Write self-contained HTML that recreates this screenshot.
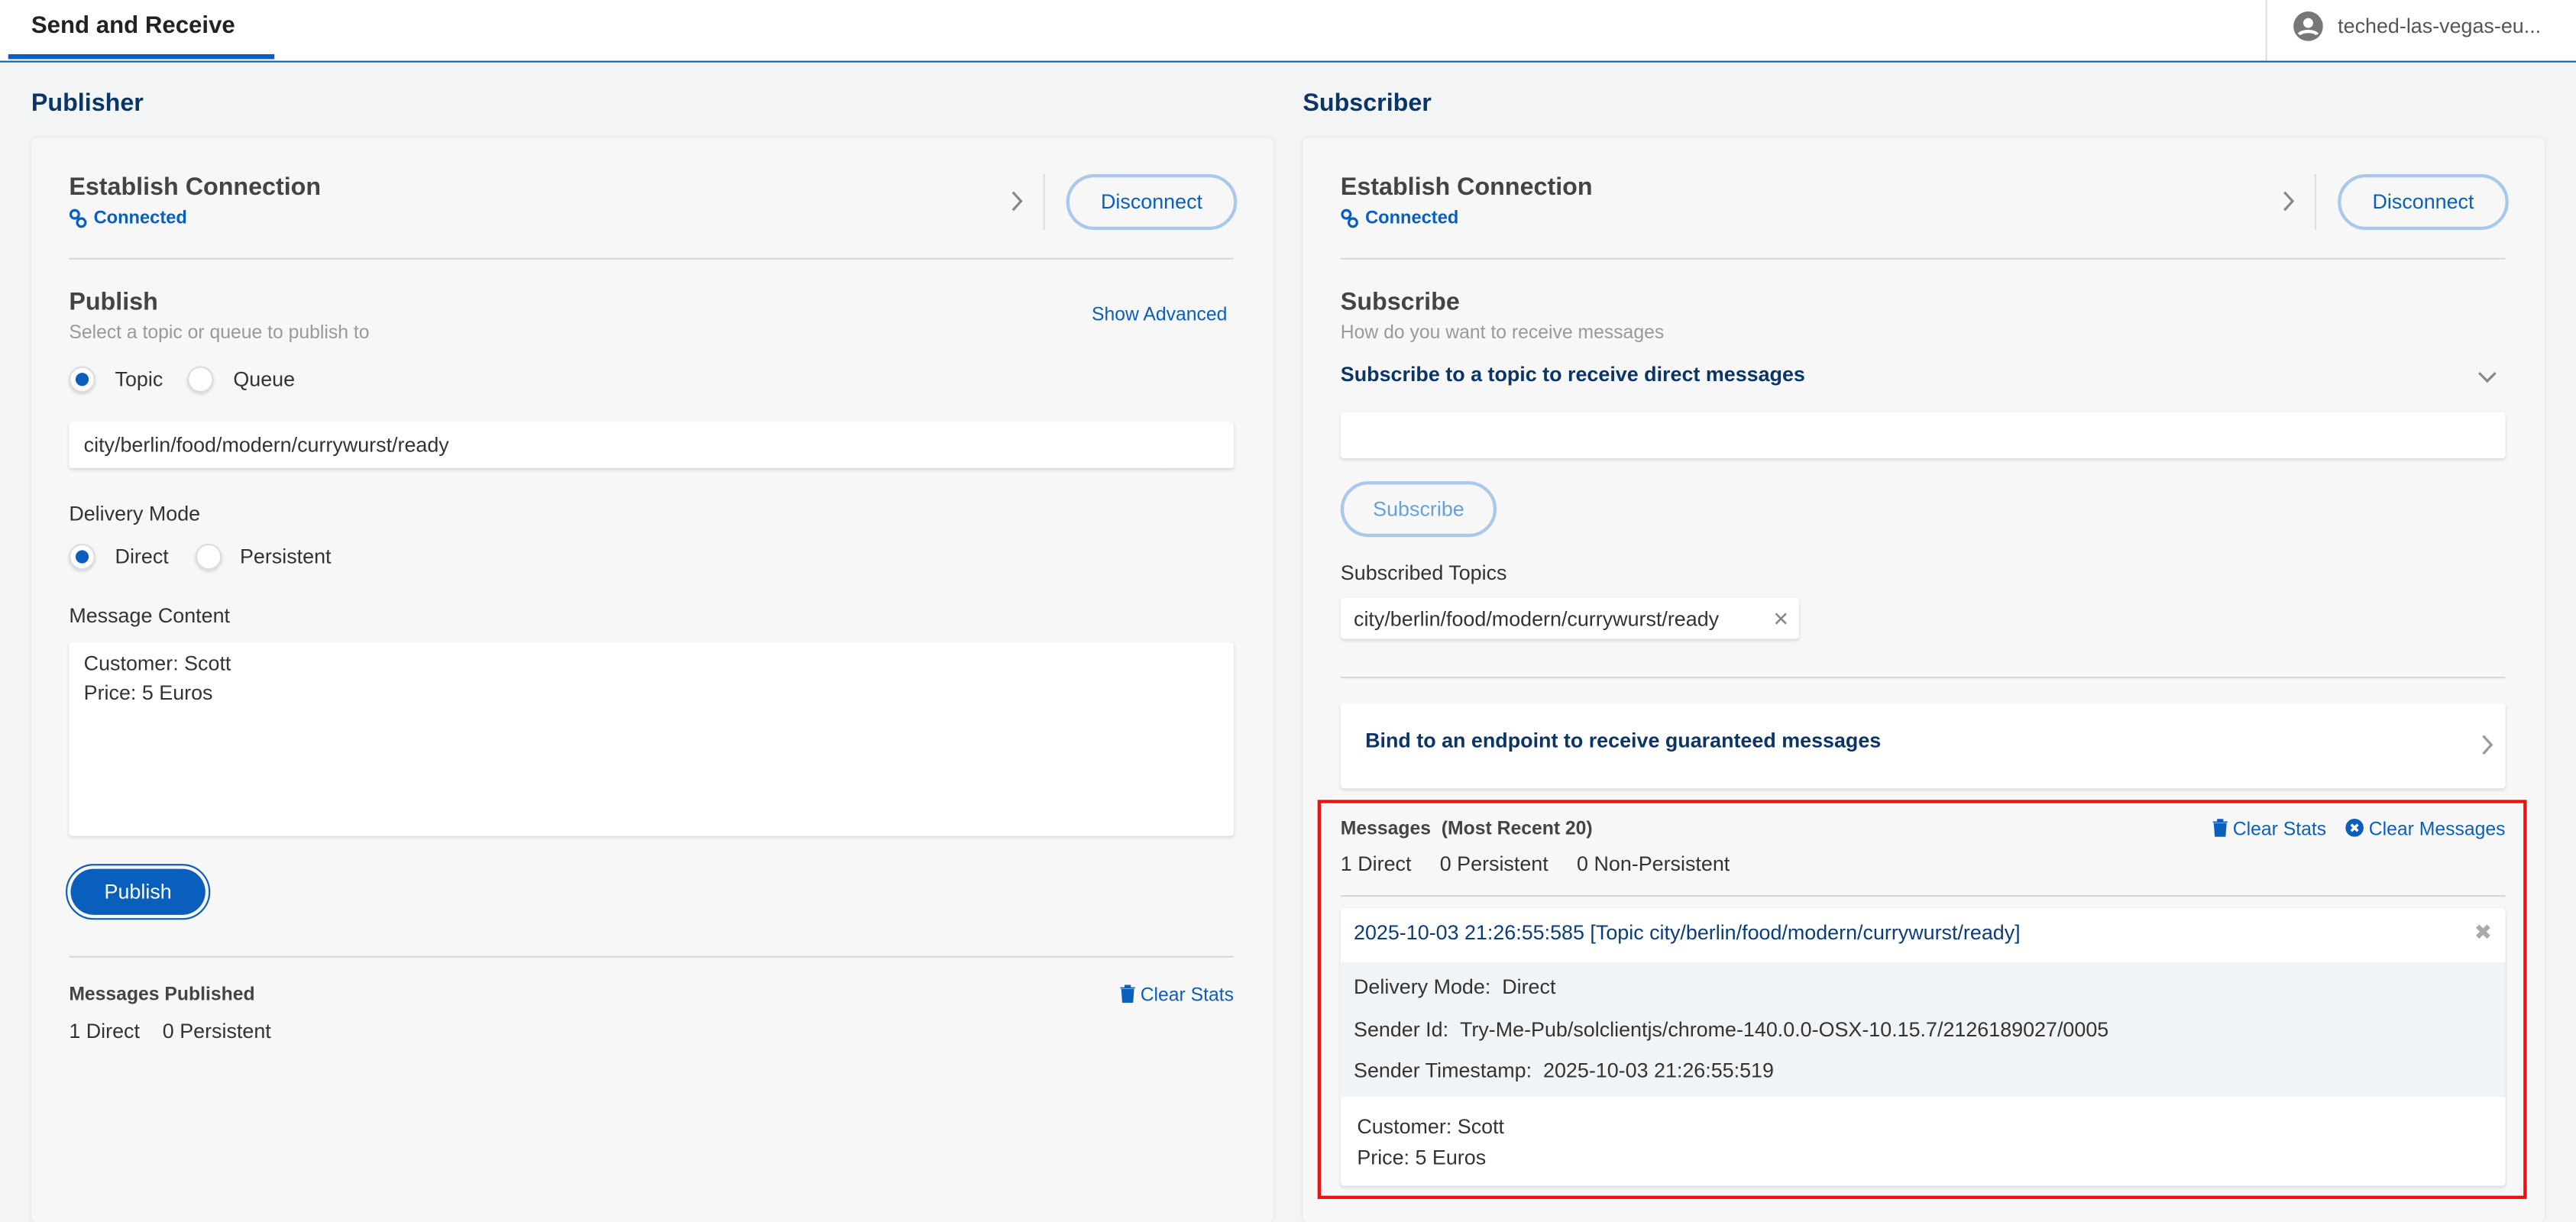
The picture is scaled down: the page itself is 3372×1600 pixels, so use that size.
<!DOCTYPE html>
<html><head><meta charset="utf-8"><style>
html,body{margin:0;padding:0;width:3372px;height:1582px;overflow:hidden;background:#f3f4f4;}
#w{position:absolute;left:0;top:0;width:1568px;height:736px;transform:scale(2.1505);transform-origin:0 0;font-family:"Liberation Sans",sans-serif;color:#333;font-size:12.5px;}
.a{position:absolute;white-space:nowrap;}
.b{font-weight:bold;}
.blue{color:#0a5fbd;}
.navy{color:#0b3566;}
.card{position:absolute;background:#f7f7f7;box-shadow:0 0 2px rgba(0,0,0,.08);border-radius:3px;}
.hr{position:absolute;height:1px;background:#d8d8d8;}
.btn{position:absolute;border:2px solid #a9c8ec;border-radius:18px;color:#0a5fbd;text-align:center;box-sizing:border-box;}
.inp{position:absolute;background:#fff;box-shadow:0 1px 2px rgba(0,0,0,.12);border-radius:2px;}
.rad{position:absolute;width:16px;height:16px;border-radius:50%;border:1px solid #ddd;background:#fff;box-shadow:0 1px 2px rgba(0,0,0,.15);box-sizing:border-box;}
.rad.on::after{content:"";position:absolute;left:3px;top:3px;width:8px;height:8px;border-radius:50%;background:#0a5fbd;}
.t{transform:translateY(-50%);}
.h2{font-size:15px;font-weight:bold;color:#444;}
.r{transform:translate(-100%,-50%);}
</style></head><body><div id="w">
<div class="a" style="left:0;top:0;width:1568px;height:37px;background:#fff;border-bottom:1px solid #0a5fbd;"></div>
<div class="a b t" style="left:19px;top:16px;font-size:14.5px;color:#222;">Send and Receive</div>
<div class="a" style="left:5px;top:33px;width:162px;height:3px;background:#0a5fbd;"></div>
<div class="a" style="left:1379px;top:0;width:1px;height:37px;background:#ddd;"></div>
<svg class="a" style="left:1396px;top:7px" width="18" height="18" viewBox="0 0 18 18"><circle cx="9" cy="9" r="9" fill="#777"/><circle cx="9" cy="7" r="3" fill="#fff"/><path d="M3.5 14c1.5-2.5 9.5-2.5 11 0" stroke="#fff" stroke-width="2" fill="none"/></svg>
<div class="a t" style="left:1423px;top:16px;color:#555;">teched-las-vegas-eu...</div>

<div class="a b t navy" style="left:19px;top:63px;font-size:15px;">Publisher</div>
<div class="a b t navy" style="left:793px;top:63px;font-size:15px;">Subscriber</div>

<div class="card" style="left:19px;top:84px;width:756px;height:660px;"></div>
<div class="card" style="left:793px;top:84px;width:756px;height:660px;"></div>

<!-- publisher -->
<div class="a h2 t" style="left:42px;top:114px;">Establish Connection</div>
<svg class="a" style="left:42px;top:127px" width="11" height="12" viewBox="0 0 11 12"><circle cx="3.5" cy="3.5" r="2.5" stroke="#0a5fbd" stroke-width="1.5" fill="none"/><circle cx="7.5" cy="8.5" r="2.5" stroke="#0a5fbd" stroke-width="1.5" fill="none"/></svg>
<div class="a b t blue" style="left:57px;top:133px;font-size:11px;">Connected</div>
<svg class="a" style="left:615px;top:116px" width="8" height="13" viewBox="0 0 8 13"><path d="M1.5 1l5 5.5-5 5.5" stroke="#888" stroke-width="1.5" fill="none"/></svg>
<div class="a" style="left:635px;top:106px;width:1px;height:34px;background:#ddd;"></div>
<div class="btn" style="left:649px;top:106px;width:104px;height:34px;line-height:30px;">Disconnect</div>
<div class="hr" style="left:42px;top:157px;width:709px;"></div>
<div class="a h2 t" style="left:42px;top:184px;">Publish</div>
<div class="a r blue" style="left:747px;top:192px;font-size:11.5px;">Show Advanced</div>
<div class="a t" style="left:42px;top:203px;font-size:11.5px;color:#999;">Select a topic or queue to publish to</div>
<div class="rad on" style="left:42px;top:223px;"></div><div class="a t" style="left:70px;top:231px;">Topic</div>
<div class="rad" style="left:114px;top:223px;"></div><div class="a t" style="left:142px;top:231px;">Queue</div>
<div class="inp" style="left:42px;top:257px;width:709px;height:28px;"></div>
<div class="a t" style="left:51px;top:271px;">city/berlin/food/modern/currywurst/ready</div>
<div class="a t" style="left:42px;top:313px;">Delivery Mode</div>
<div class="rad on" style="left:42px;top:331px;"></div><div class="a t" style="left:70px;top:339px;">Direct</div>
<div class="rad" style="left:119px;top:331px;"></div><div class="a t" style="left:146px;top:339px;">Persistent</div>
<div class="a t" style="left:42px;top:375px;">Message Content</div>
<div class="inp" style="left:42px;top:391px;width:709px;height:118px;"></div>
<div class="a t" style="left:51px;top:404px;">Customer: Scott</div>
<div class="a t" style="left:51px;top:422px;">Price: 5 Euros</div>
<div class="a" style="left:40px;top:526px;width:88px;height:34px;border:1px solid #0a5fbd;border-radius:18px;box-sizing:border-box;"></div>
<div class="a" style="left:43px;top:529px;width:82px;height:28px;background:#0a5fbd;border-radius:15px;color:#fff;text-align:center;line-height:28px;">Publish</div>
<div class="hr" style="left:42px;top:582px;width:709px;"></div>
<div class="a b t" style="left:42px;top:606px;font-size:11.5px;color:#444;">Messages Published</div>
<div class="a r blue" style="left:751px;top:606px;font-size:11.5px;"><svg width="9" height="11" viewBox="0 0 9 11" style="vertical-align:-1px"><path d="M0 2h9M3 2V0.5h3V2M1 3h7l-.6 8H1.6z" fill="#0a5fbd" stroke="#0a5fbd" stroke-width=".8"/></svg> Clear Stats</div>
<div class="a t" style="left:42px;top:628px;">1 Direct&nbsp;&nbsp;&nbsp;&nbsp;0 Persistent</div>

<!-- subscriber -->
<div class="a h2 t" style="left:816px;top:114px;">Establish Connection</div>
<svg class="a" style="left:816px;top:127px" width="11" height="12" viewBox="0 0 11 12"><circle cx="3.5" cy="3.5" r="2.5" stroke="#0a5fbd" stroke-width="1.5" fill="none"/><circle cx="7.5" cy="8.5" r="2.5" stroke="#0a5fbd" stroke-width="1.5" fill="none"/></svg>
<div class="a b t blue" style="left:831px;top:133px;font-size:11px;">Connected</div>
<svg class="a" style="left:1389px;top:116px" width="8" height="13" viewBox="0 0 8 13"><path d="M1.5 1l5 5.5-5 5.5" stroke="#888" stroke-width="1.5" fill="none"/></svg>
<div class="a" style="left:1409px;top:106px;width:1px;height:34px;background:#ddd;"></div>
<div class="btn" style="left:1423px;top:106px;width:104px;height:34px;line-height:30px;">Disconnect</div>
<div class="hr" style="left:816px;top:157px;width:709px;"></div>
<div class="a h2 t" style="left:816px;top:184px;">Subscribe</div>
<div class="a t" style="left:816px;top:203px;font-size:11.5px;color:#999;">How do you want to receive messages</div>
<div class="a b t navy" style="left:816px;top:228px;">Subscribe to a topic to receive direct messages</div>
<svg class="a" style="left:1508px;top:226px" width="12" height="8" viewBox="0 0 12 8"><path d="M1 1l5 5 5-5" stroke="#888" stroke-width="1.5" fill="none"/></svg>
<div class="inp" style="left:816px;top:251px;width:709px;height:28px;"></div>
<div class="btn" style="left:816px;top:293px;width:95px;height:34px;line-height:30px;color:#6aa0d8;">Subscribe</div>
<div class="a t" style="left:816px;top:349px;">Subscribed Topics</div>
<div class="inp" style="left:816px;top:364px;width:279px;height:25px;"></div>
<div class="a t" style="left:824px;top:377px;">city/berlin/food/modern/currywurst/ready</div>
<div class="a t" style="left:1079px;top:377px;color:#888;font-size:12px;">&#x2715;</div>
<div class="hr" style="left:816px;top:412px;width:709px;"></div>
<div class="inp" style="left:816px;top:428px;width:709px;height:52px;"></div>
<div class="a b t navy" style="left:831px;top:451px;">Bind to an endpoint to receive guaranteed messages</div>
<svg class="a" style="left:1510px;top:447px" width="8" height="13" viewBox="0 0 8 13"><path d="M1.5 1l5 5.5-5 5.5" stroke="#999" stroke-width="1.5" fill="none"/></svg>

<div class="a" style="left:802px;top:487px;width:736px;height:243px;border:2px solid #f01010;box-sizing:border-box;"></div>
<div class="a b t" style="left:816px;top:505px;font-size:11.5px;color:#444;">Messages&nbsp;&nbsp;(Most Recent 20)</div>
<div class="a r blue" style="left:1416px;top:505px;font-size:11.5px;"><svg width="9" height="11" viewBox="0 0 9 11" style="vertical-align:-1px"><path d="M0 2h9M3 2V0.5h3V2M1 3h7l-.6 8H1.6z" fill="#0a5fbd" stroke="#0a5fbd" stroke-width=".8"/></svg> Clear Stats</div>
<div class="a r blue" style="left:1525px;top:505px;font-size:11.5px;"><svg width="11" height="11" viewBox="0 0 11 11" style="vertical-align:-1px"><circle cx="5.5" cy="5.5" r="5.5" fill="#0a5fbd"/><path d="M3.5 3.5l4 4M7.5 3.5l-4 4" stroke="#fff" stroke-width="1.6"/></svg> Clear Messages</div>
<div class="a t" style="left:816px;top:526px;">1 Direct&nbsp;&nbsp;&nbsp;&nbsp;&nbsp;0 Persistent&nbsp;&nbsp;&nbsp;&nbsp;&nbsp;0 Non-Persistent</div>
<div class="hr" style="left:816px;top:545px;width:709px;"></div>
<div class="inp" style="left:816px;top:553px;width:709px;height:169px;"></div>
<div class="a t navy" style="left:824px;top:568px;color:#0b3d7a;">2025-10-03 21:26:55:585 [Topic city/berlin/food/modern/currywurst/ready]</div>
<div class="a t" style="left:1506px;top:568px;color:#aaa;font-size:13px;">&#x2716;</div>
<div class="a" style="left:816px;top:586px;width:709px;height:82px;background:#f1f4f7;"></div>
<div class="a t" style="left:824px;top:601px;">Delivery Mode:&nbsp;&nbsp;Direct</div>
<div class="a t" style="left:824px;top:627px;">Sender Id:&nbsp;&nbsp;Try-Me-Pub/solclientjs/chrome-140.0.0-OSX-10.15.7/2126189027/0005</div>
<div class="a t" style="left:824px;top:652px;">Sender Timestamp:&nbsp;&nbsp;2025-10-03 21:26:55:519</div>
<div class="a t" style="left:826px;top:686px;">Customer: Scott</div>
<div class="a t" style="left:826px;top:705px;">Price: 5 Euros</div>
</div></body></html>
